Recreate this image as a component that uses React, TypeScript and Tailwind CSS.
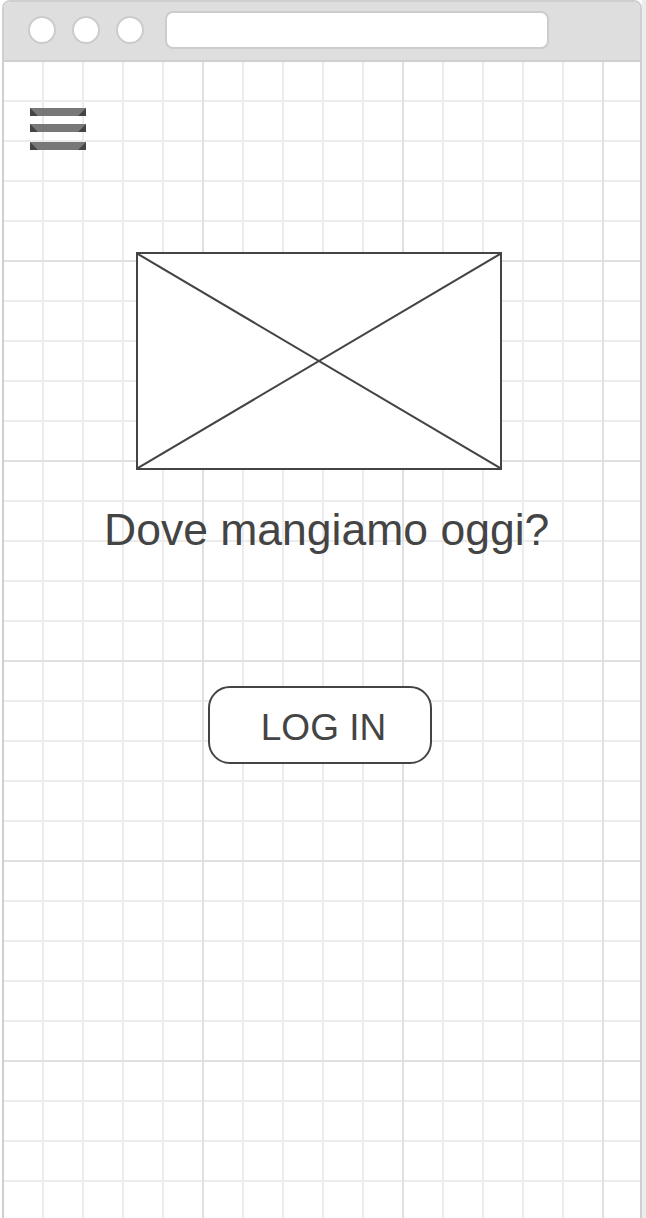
export default function App() {
  return (
    <div className="relative w-[646px] h-[1218px] overflow-hidden bg-white font-['Liberation_Sans',Arial,sans-serif]">
      <div className="flex items-start h-full">
        <div className="w-[2px] h-full shrink-0 bg-white" />
        <div className="flex flex-col w-[640px] h-[1260px] shrink-0 border-2 border-[#cfcfcf] rounded-t-[8px] overflow-hidden bg-white">
          {/* browser top bar */}
          <div className="flex items-center h-[60px] shrink-0 bg-[#dedede] border-b-2 border-[#cfcfcf] pl-[24px] pb-[2px]">
            <div className="flex gap-[16px]">
              <div className="w-[28px] h-[28px] rounded-full border-2 border-[#cccccc] bg-white" />
              <div className="w-[28px] h-[28px] rounded-full border-2 border-[#cccccc] bg-white" />
              <div className="w-[28px] h-[28px] rounded-full border-2 border-[#cccccc] bg-white" />
            </div>
            <div className="ml-[21px] w-[384px] h-[38px] rounded-[8px] border-2 border-[#cccccc] bg-white" />
          </div>
          {/* content with grid */}
          <div className="flex-1 flex flex-col items-start bg-white [background-image:linear-gradient(to_right,transparent_198px,#e0e0e0_198px),linear-gradient(to_bottom,transparent_198px,#e0e0e0_198px),linear-gradient(to_right,transparent_38px,#ececec_38px),linear-gradient(to_bottom,transparent_38px,#ececec_38px)] [background-size:200px_200px,200px_200px,40px_40px,40px_40px]">
            <svg className="ml-[26px] mt-[46px]" width="56" height="42" viewBox="0 0 56 42">
              <rect x="0" y="0" width="56" height="8" fill="#454545" />
              <polygon points="0,0 56,0 48,8 8,8" fill="#787878" />
              <rect x="0" y="16" width="56" height="8" fill="#454545" />
              <polygon points="0,16 56,16 48,24 8,24" fill="#787878" />
              <rect x="0" y="34" width="56" height="8" fill="#454545" />
              <polygon points="0,34 56,34 48,42 8,42" fill="#787878" />
            </svg>
            <div className="ml-[132px] mt-[102px] w-[366px] h-[218px] border-2 border-[#444444] bg-white">
              <svg className="block w-full h-full" viewBox="0 0 362 214" preserveAspectRatio="none">
                <line x1="0" y1="0" x2="362" y2="214" stroke="#444444" strokeWidth="2" />
                <line x1="362" y1="0" x2="0" y2="214" stroke="#444444" strokeWidth="2" />
              </svg>
            </div>
            <div className="ml-[100px] mt-[38px] whitespace-nowrap text-[44.5px] leading-[44px] text-[#444444]">
              Dove mangiamo oggi?
            </div>
            <div className="ml-[204px] mt-[134px] flex justify-center w-[224px] h-[78px] rounded-[22px] border-2 border-[#444444] bg-white pl-[7px] pt-[21px]">
              <span className="text-[37px] leading-[37px] text-[#444444] whitespace-nowrap">LOG IN</span>
            </div>
          </div>
        </div>
        <div className="w-[4px] h-full shrink-0 bg-[#ececec]" />
      </div>
    </div>
  );
}
